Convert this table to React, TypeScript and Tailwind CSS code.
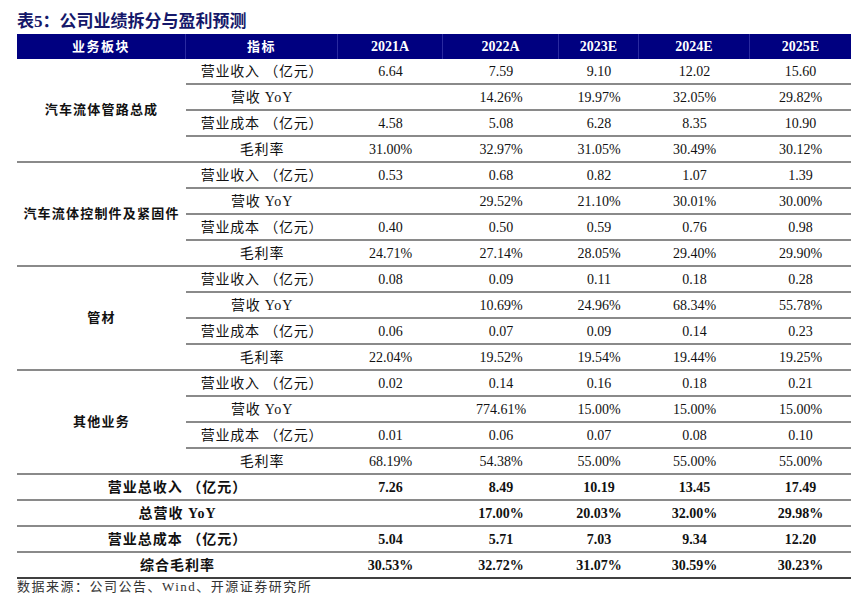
const FONT = { fontFamily: '"Liberation Serif", "Noto Sans CJK SC", serif' }

const YEARS = ['2021A', '2022A', '2023E', '2024E', '2025E']

const METRICS = ['营业收入 （亿元）', '营收 YoY', '营业成本 （亿元）', '毛利率']

const GROUPS: { name: string; rows: string[][] }[] = [
  {
    name: '汽车流体管路总成',
    rows: [
      ['6.64', '7.59', '9.10', '12.02', '15.60'],
      ['', '14.26%', '19.97%', '32.05%', '29.82%'],
      ['4.58', '5.08', '6.28', '8.35', '10.90'],
      ['31.00%', '32.97%', '31.05%', '30.49%', '30.12%'],
    ],
  },
  {
    name: '汽车流体控制件及紧固件',
    rows: [
      ['0.53', '0.68', '0.82', '1.07', '1.39'],
      ['', '29.52%', '21.10%', '30.01%', '30.00%'],
      ['0.40', '0.50', '0.59', '0.76', '0.98'],
      ['24.71%', '27.14%', '28.05%', '29.40%', '29.90%'],
    ],
  },
  {
    name: '管材',
    rows: [
      ['0.08', '0.09', '0.11', '0.18', '0.28'],
      ['', '10.69%', '24.96%', '68.34%', '55.78%'],
      ['0.06', '0.07', '0.09', '0.14', '0.23'],
      ['22.04%', '19.52%', '19.54%', '19.44%', '19.25%'],
    ],
  },
  {
    name: '其他业务',
    rows: [
      ['0.02', '0.14', '0.16', '0.18', '0.21'],
      ['', '774.61%', '15.00%', '15.00%', '15.00%'],
      ['0.01', '0.06', '0.07', '0.08', '0.10'],
      ['68.19%', '54.38%', '55.00%', '55.00%', '55.00%'],
    ],
  },
]

const TOTALS: { label: string; values: string[] }[] = [
  { label: '营业总收入 （亿元）', values: ['7.26', '8.49', '10.19', '13.45', '17.49'] },
  { label: '总营收 YoY', values: ['', '17.00%', '20.03%', '32.00%', '29.98%'] },
  { label: '营业总成本 （亿元）', values: ['5.04', '5.71', '7.03', '9.34', '12.20'] },
  { label: '综合毛利率', values: ['30.53%', '32.72%', '31.07%', '30.59%', '30.23%'] },
]

const cell = 'h-[26px] flex items-center justify-center border-b-2 border-[#8a8a8a] text-[14px] text-[#111]'
const cjk = 'text-[13px] tracking-[0.8px]'

export default function App() {
  return (
    <div className="w-[854px] h-[607px] bg-white px-[17px]" style={FONT}>
      <div className="h-[34px] pt-[9px] flex items-center text-[17px] font-bold text-[#15186a]">
        表5：公司业绩拆分与盈利预测
      </div>

      <div className="grid grid-cols-[169px_152px_105px_116px_80px_111px_101px]">
        {/* header */}
        <div className="h-[25px] bg-[#000080] border-r border-[#2a2aa0] flex items-center justify-center text-white font-bold text-[13px] tracking-[1.5px]">业务板块</div>
        <div className="h-[25px] bg-[#000080] border-r border-[#2a2aa0] flex items-center justify-center text-white font-bold text-[13px] tracking-[1.5px]">指标</div>
        {YEARS.map((y, i) => (
          <div
            key={y}
            className={`h-[25px] bg-[#000080] flex items-center justify-center text-white font-bold text-[14px] ${i < YEARS.length - 1 ? 'border-r border-[#2a2aa0]' : ''}`}
          >
            {y}
          </div>
        ))}

        {GROUPS.map(g => (
          <div key={g.name} className="contents">
            <div className="row-span-4 flex items-center justify-center border-b-2 border-[#8a8a8a] text-[13px] font-bold tracking-[1.2px] text-[#111]">
              {g.name}
            </div>
            {g.rows.map((r, ri) => (
              <div key={ri} className="contents">
                <div className={`${cell} ${cjk}`}>{METRICS[ri]}</div>
                {r.map((v, vi) => (
                  <div key={vi} className={cell}>{v}</div>
                ))}
              </div>
            ))}
          </div>
        ))}

        {TOTALS.map((t, ti) => {
          const last = ti === TOTALS.length - 1
          const c = `h-[26px] flex items-center justify-center border-b-2 font-bold text-[14px] text-[#111] ${last ? 'border-[#404040]' : 'border-[#8a8a8a]'}`
          return (
            <div key={t.label} className="contents">
              <div className={`${c} col-span-2 text-[13px] tracking-[1px]`}>{t.label}</div>
              {t.values.map((v, vi) => (
                <div key={vi} className={c}>{v}</div>
              ))}
            </div>
          )
        })}
      </div>

      <div className="text-[13px] leading-[16px] tracking-[1.5px] text-[#333]">
        数据来源：公司公告、Wind、开源证券研究所
      </div>
    </div>
  )
}
